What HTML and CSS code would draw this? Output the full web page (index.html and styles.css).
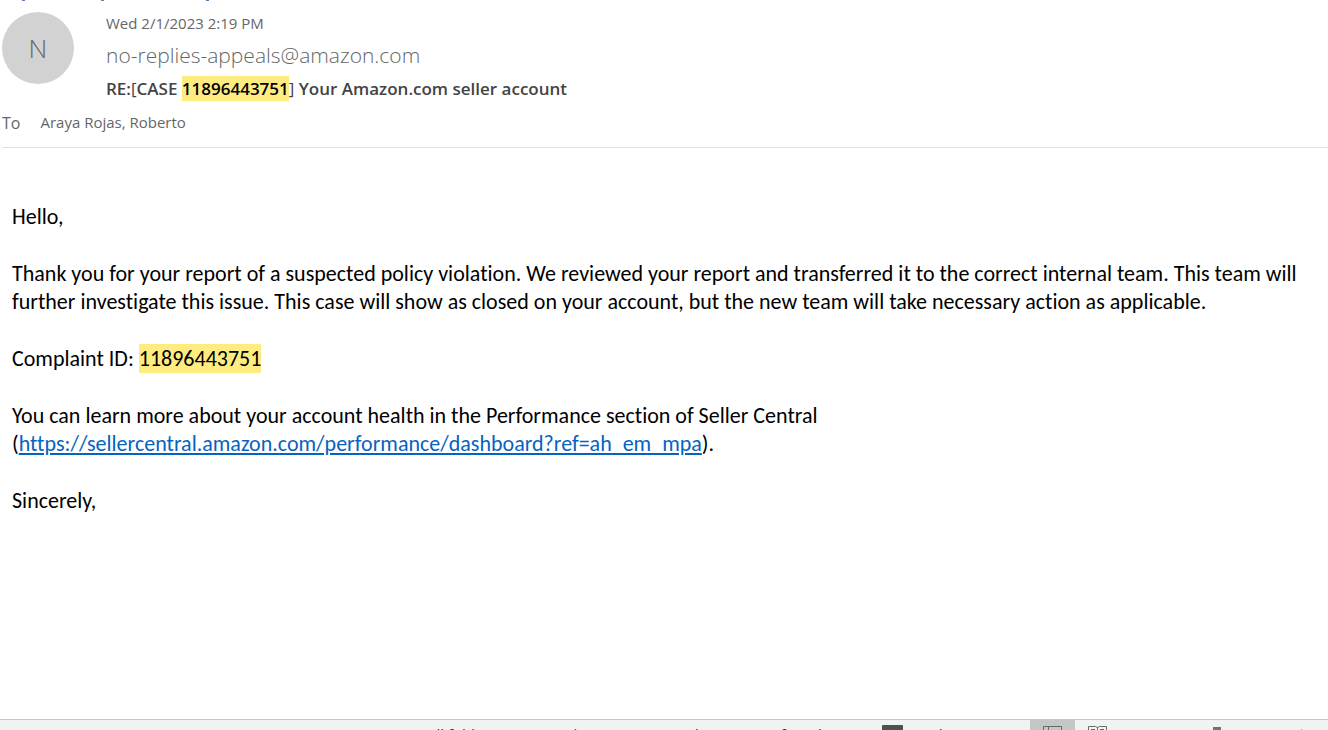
FILE: index.html
```html
<!DOCTYPE html>
<html lang="en">
  <head>
    <meta charset="UTF-8">
    <meta name="viewport" content="width=device-width, initial-scale=1.0">
    <title>RE:[CASE 11896443751] Your Amazon.com seller account</title>
    <link rel="stylesheet" href="styles.css">
  </head>
  <body>
    <!-- Lower edge of the bar above the message -->
    <svg class="top-edge" width="240" height="2" aria-hidden="true">
      <path d="M22 .5h3M101 .5h3" stroke="#9468b8" />
      <path d="M206 .5h3" stroke="#4a7fb8" />
    </svg>

    <!-- Message header -->
    <header class="message-header">
      <div class="sender">
        <div class="avatar">N</div>
        <div class="details">
          <p class="date">Wed 2/1/2023 2:19 PM</p>
          <p class="from">no-replies-appeals@amazon.com</p>
          <h1 class="subject">RE:<span class="light">[</span>CASE <mark>11896443751</mark><span class="light">]</span> Your Amazon.com seller account</h1>
        </div>
      </div>
      <div class="recipients">
        <span class="to">To</span>
        <span class="name">Araya Rojas, Roberto</span>
      </div>
    </header>

    <!-- Message body -->
    <main class="message-body">
      <p>Hello,</p>
      <p>Thank you for your report of a suspected policy violation. We reviewed your report and transferred it to the correct internal team. This team will further investigate this issue. This case will show as closed on your account, but the new team will take necessary action as applicable.</p>
      <p>Complaint ID: <mark>11896443751</mark></p>
      <p>You can learn more about your account health in the Performance section of Seller Central<br>
      (<a href="https://sellercentral.amazon.com/performance/dashboard?ref=ah_em_mpa">https://sellercentral.amazon.com/performance/dashboard?ref=ah_em_mpa</a>).</p>
      <p>Sincerely,</p>
    </main>

    <!-- Status bar -->
    <footer class="status-bar">
      <span class="status">All folders are up to date.</span>
      <span class="status">Connected to: Microsoft Exchange</span>
      <button class="display" type="button">
        <svg width="21" height="14" viewBox="0 0 21 14" aria-hidden="true">
          <rect width="21" height="14" rx="1" fill="#505050" />
        </svg>
        Display Settings
      </button>
      <button class="view active" type="button" aria-label="Normal view">
        <svg width="19" height="14" viewBox="0 0 19 14" fill="none" stroke="#6a6a6a" aria-hidden="true">
          <path d="M.5 .5h18v13H.5zM5.5 1v12M6 5.5h12" />
        </svg>
      </button>
      <button class="view" type="button" aria-label="Reading view">
        <svg width="19" height="14" viewBox="0 0 19 14" fill="none" stroke="#6a6a6a" aria-hidden="true">
          <path d="M.5 .5h7l2 1 2-1h7v12h-7l-2 1-2-1h-7zM9.5 1v12M3 3.5h4M12 3.5h4M3 6.5h4M12 6.5h4" />
        </svg>
      </button>
      <svg class="zoom" width="98" height="14" viewBox="0 0 98 14" aria-hidden="true">
        <path d="M0 7.5h88" stroke="#a0a0a0" />
        <rect x="5" width="8" height="13" fill="#737373" />
        <path d="M93.5 2v9M89 6.5h9" stroke="#a0a0a0" />
      </svg>
    </footer>
  </body>
</html>
```

FILE: styles.css
```css
* {
  box-sizing: border-box;
}

body {
  margin: 0;
  min-height: 100vh;
  display: flex;
  flex-direction: column;
  background: #fff;
  color: #000;
  font-family: "Open Sans", "Noto Sans", sans-serif;
}

p,
h1 {
  margin: 0;
}

mark {
  padding: 1px 0;
  background: #ffec80;
  color: #000;
}

.top-edge {
  display: block;
}

/* Message header */
.message-header {
  margin-left: 2px;
  padding: 10px 0 12px;
  border-bottom: 1px solid #e1e1e1;
  color: #666;
}

.sender {
  display: flex;
  gap: 32px;
}

.avatar {
  width: 72px;
  height: 72px;
  border-radius: 50%;
  background: #d2d2d2;
  font-size: 26px;
  font-weight: 300;
  line-height: 72px;
  text-align: center;
}

.date {
  font-size: 15px;
  line-height: 22px;
}

.from {
  font-size: 21px;
  font-weight: 300;
  line-height: 42px;
}

.subject {
  color: #444;
  font-size: 17px;
  font-weight: 600;
  line-height: 25px;
}

.light {
  font-weight: 400;
}

.recipients {
  display: flex;
  gap: 20px;
  margin-top: 10px;
  line-height: 24px;
}

.to {
  font-size: 16px;
}

.name {
  font-size: 15px;
  line-height: 22px;
}

/* Message body */
.message-body {
  flex: 1;
  display: flex;
  flex-direction: column;
  gap: 29px;
  padding: 55px 12px 28px;
  font-family: Calibri, Carlito, Lato, sans-serif;
  font-size: 22px;
  font-variant-ligatures: none;
  line-height: 28px;
}

.message-body mark {
  padding: 1px 0;
}

.message-body a {
  color: #0563c1;
}

/* Status bar, only its upper edge is on screen */
.status-bar {
  display: flex;
  align-items: flex-start;
  height: 11px;
  overflow: hidden;
  padding-left: 427px;
  border-top: 1px solid #c6c6c6;
  background: #f2f2f2;
  color: #333;
  font-size: 15px;
  line-height: 20px;
  white-space: nowrap;
}

.status {
  margin: 4px 20px 0 0;
}

.status-bar button {
  display: flex;
  flex-shrink: 0;
  gap: 5px;
  height: 24px;
  margin: 0;
  padding: 5px 0 0;
  border: 0;
  background: none;
  color: inherit;
  font: inherit;
  line-height: 18px;
}

.status-bar .display {
  margin-left: auto;
  padding-right: 12px;
}

.status-bar .view {
  justify-content: center;
  width: 45px;
  padding-top: 6px;
}

.status-bar .active {
  background: #c6c6c6;
}

.zoom {
  flex-shrink: 0;
  margin: 7px 22px 0 88px;
}
```
